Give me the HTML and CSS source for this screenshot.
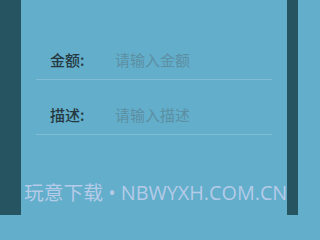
FILE: index.html
```html
<!DOCTYPE html>
<html>
<head>
<meta charset="utf-8">
<link rel="stylesheet" href="styles.css">
</head>
<body>
<div class="screen">
  <div class="bar-left"></div>
  <div class="panel">
    <div class="form">
      <div class="row row-first">
        <span class="label">金额:</span>
        <span class="placeholder">请输入金额</span>
      </div>
      <div class="row">
        <span class="label">描述:</span>
        <span class="placeholder">请输入描述</span>
      </div>
    </div>
  </div>
  <div class="bar-right"></div>
  <div class="edge"></div>
  <div class="watermark">玩意下载 • NBWYXH.COM.CN</div>
</div>
</body>
</html>
```
FILE: styles.css
```css
html, body {
  margin: 0;
  padding: 0;
}
body {
  background: #62aecb;
  font-family: "Noto Sans CJK SC", "Noto Sans", sans-serif;
}
.screen {
  position: relative;
  display: flex;
  width: 311px;
  height: 215px;
  overflow: hidden;
  background: #62aecb;
}
.bar-left {
  width: 21px;
  background: #265561;
}
.panel {
  width: 266px;
  background: #62aecb;
  padding: 45px 15px 0;
  box-sizing: border-box;
}
.bar-right {
  width: 11px;
  background: #265561;
}
.edge {
  flex: 1;
  background: #62aecb;
}
.row {
  display: flex;
  align-items: center;
  height: 28px;
  padding: 20px 0 6px 14px;
  border-bottom: 1px solid #7fbdd5;
}
.row-first {
  padding-top: 0;
}
.label {
  width: 65px;
  font-size: 15px;
  font-weight: 500;
  color: #263840;
}
.placeholder {
  font-size: 15px;
  color: #5d8fa3;
}
.watermark {
  position: absolute;
  left: 24px;
  top: 179px;
  font-family: "Open Sans", "Noto Sans CJK SC", sans-serif;
  font-size: 19.8px;
  line-height: 28px;
  color: #b5cbe8;
  white-space: nowrap;
}
```
